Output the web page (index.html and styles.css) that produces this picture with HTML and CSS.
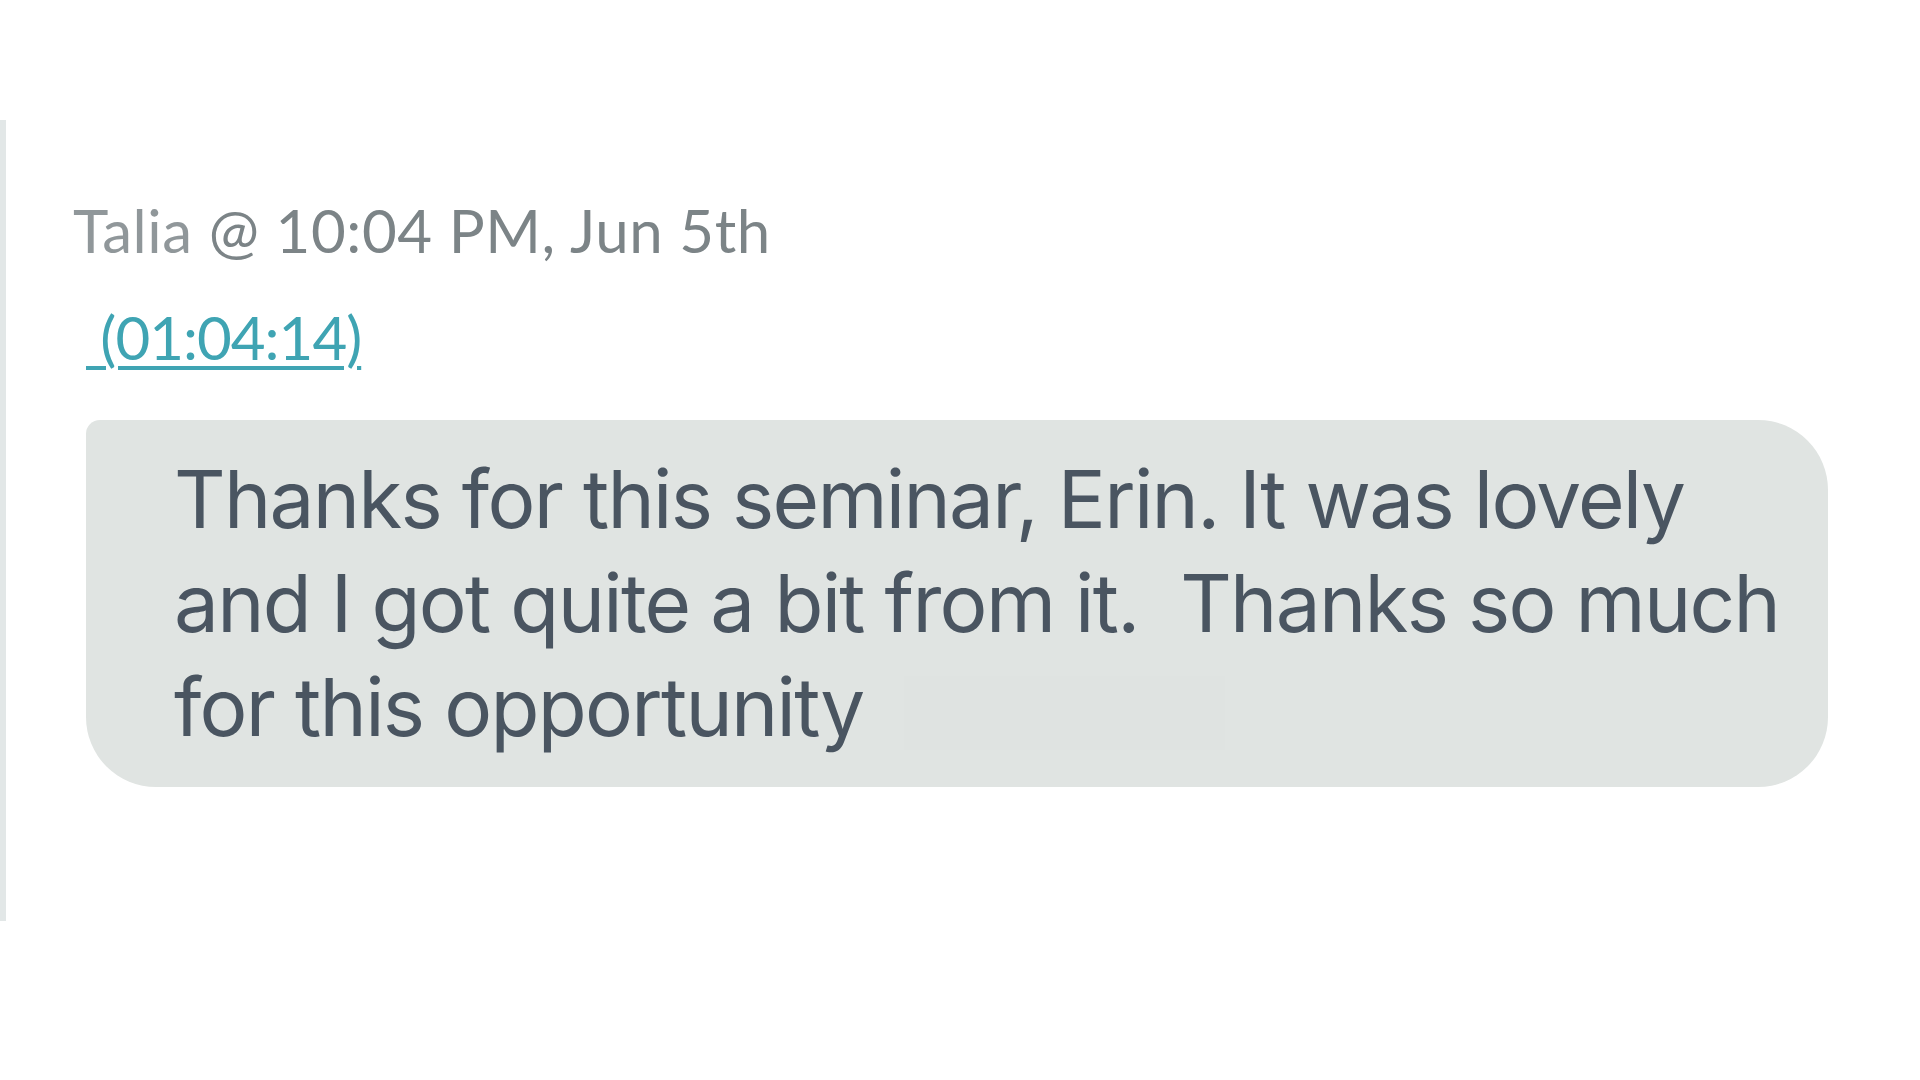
FILE: index.html
```html
<!DOCTYPE html>
<html>
<head>
<meta charset="utf-8">
<link rel="stylesheet" href="styles.css">
</head>
<body>
<div class="thread">
  <div class="message">
    <div class="meta"><span class="author">Talia</span> <span class="stamp">@ 10:04 PM, Jun 5th</span></div>
    <a class="timecode" href="#">&nbsp;(01:04:14)</a>
    <div class="bubble">
      <p class="body">Thanks for this seminar, Erin. It was lovely and I got quite a bit from it.&nbsp; Thanks so much for this opportunity<span class="ghost"></span></p>
    </div>
  </div>
</div>
</body>
</html>
```
FILE: styles.css
```css
html, body {
  margin: 0;
  padding: 0;
  background: #ffffff;
}
.thread {
  margin-top: 120px;
  height: 801px;
  border-left: 6px solid #e2e7e7;
  box-sizing: border-box;
}
.message {
  padding-left: 67px;
  padding-top: 70px;
}
.meta {
  font-family: "Lato", "Open Sans", sans-serif;
  font-size: 60px;
  line-height: 80px;
  color: #7c8487;
  letter-spacing: 0.6px;
}
.author {
  color: #90979a;
}
.timecode {
  display: inline-block;
  margin-left: 13px;
  margin-top: 27px;
  font-family: "Lato", "Open Sans", sans-serif;
  font-size: 60px;
  line-height: 80px;
  color: #3fa4b3;
  text-decoration: underline;
  text-decoration-thickness: 4px;
  text-underline-offset: 6px;
  letter-spacing: -1px;
}
.bubble {
  margin-left: 13px;
  margin-top: 43px;
  width: 1742px;
  height: 367px;
  box-sizing: border-box;
  background: #e0e4e2;
  border-radius: 14px 70px 70px 70px;
  padding: 27px 12px 0 88px;
}
.body {
  margin: 0;
  font-family: "Inter", "Noto Sans", sans-serif;
  font-size: 80px;
  line-height: 104px;
  color: #4a5561;
  letter-spacing: -1.7px;
}
.ghost {
  display: inline-block;
  width: 321px;
  height: 74px;
  margin-left: 40px;
  vertical-align: -14px;
  background: #dfe3e1;
}
```
